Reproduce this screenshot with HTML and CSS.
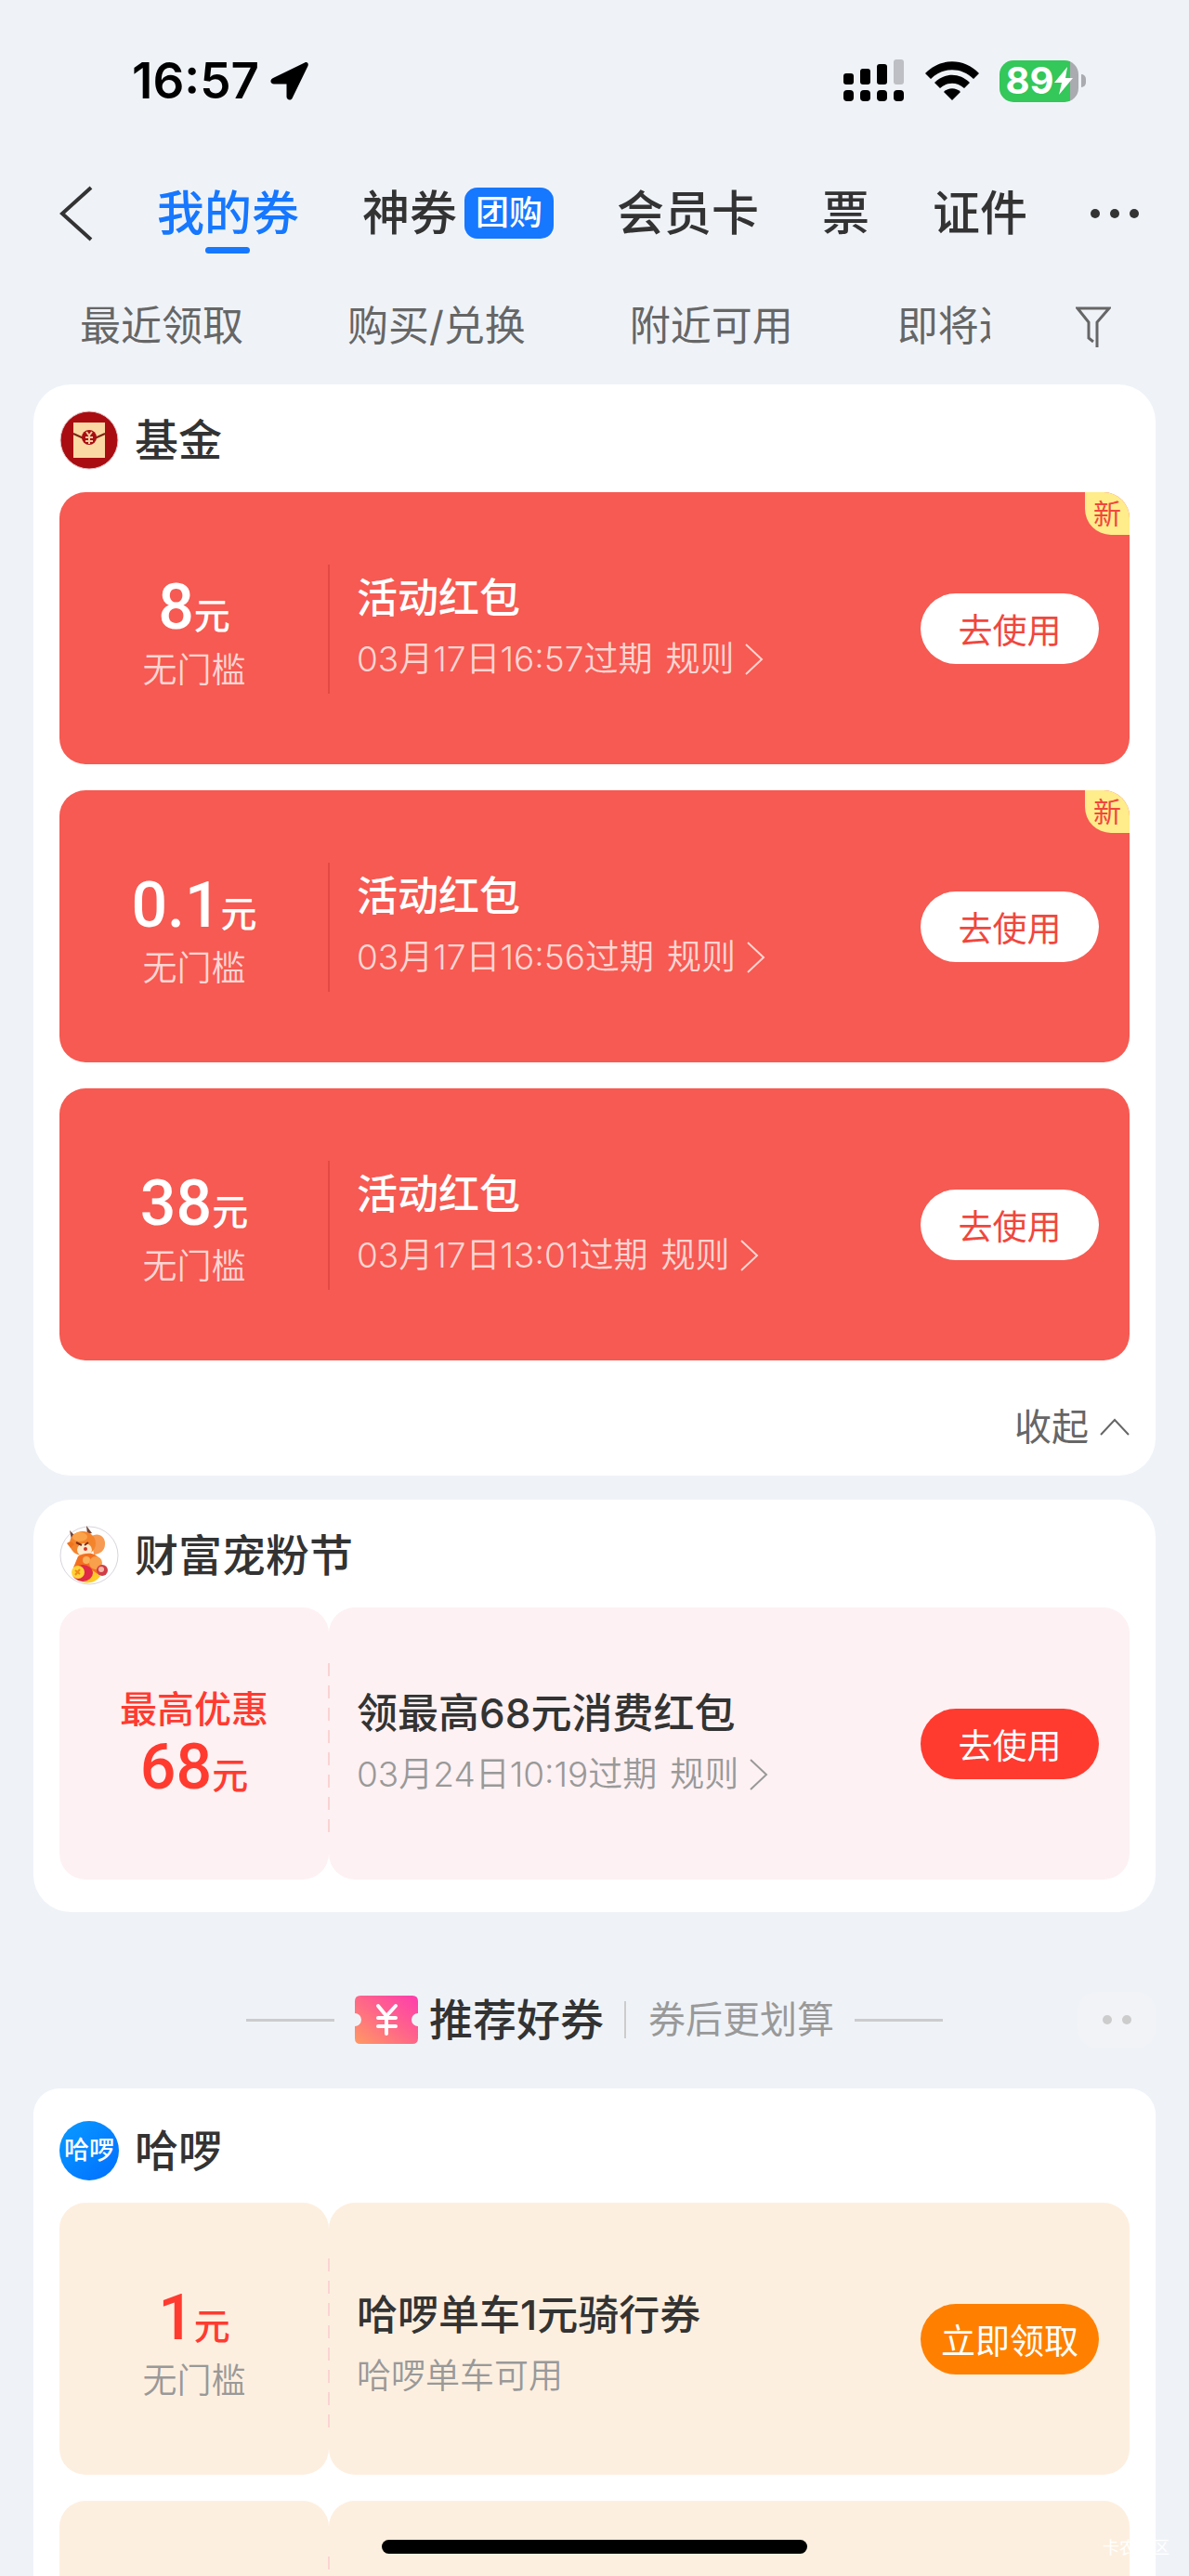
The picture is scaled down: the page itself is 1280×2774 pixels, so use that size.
FILE: index.html
```html
<!DOCTYPE html>
<html lang="zh-CN">
<head>
    <meta charset="UTF-8">
    <meta name="viewport" content="width=device-width, initial-scale=1.0">
    <title>我的券</title>
    <link rel="stylesheet" href="styles.css">
</head>
<body>
    <div class="app">
        <div class="status-bar">
            <div class="status-left">
                <span>16:57</span>
                <svg width="42" height="42" viewBox="0 0 42 42"><path d="M37 1.500 3 18c-4 2-3 6.500 1 6.500h13.500V38c0 4 5 5 6.500 1L40.500 5c1-3-1-5-3.500-3.500z"/></svg>
            </div>
            <div class="status-right">
                <svg width="66" height="46" viewBox="0 0 66 46">
                    <rect x="0" y="15" width="11" height="12" rx="3"/>
                    <rect x="18" y="10" width="11" height="17" rx="3"/>
                    <rect x="36" y="5" width="11" height="22" rx="3"/>
                    <rect x="54" y="0" width="11" height="27" rx="3" fill="#bdbfc4"/>
                    <rect x="0" y="33" width="11" height="12" rx="4"/>
                    <rect x="18" y="33" width="11" height="12" rx="4"/>
                    <rect x="36" y="33" width="11" height="12" rx="4"/>
                    <rect x="54" y="33" width="11" height="12" rx="4"/>
                </svg>
                <svg width="58" height="43" viewBox="0 0 58 43">
                    <path d="M0 13C16-4 42-4 58 13l-6 6C39 6 19 6 6 19z"/>
                    <path d="M10 23c11-11 27-11 38 0l-6 6c-8-7-18-7-26 0z"/>
                    <path d="M20 33c5-5 13-5 18 0l-9 9z"/>
                </svg>
                <div class="battery">
                    <span>89</span>
                    <svg width="20" height="30" viewBox="0 0 20 30"><path d="M14 0 0 17h8L5 30 20 12h-8z" fill="#fff"/></svg>
                </div>
            </div>
        </div>

        <nav class="top-nav">
            <a class="back" href="#" aria-label="返回">
                <svg width="38" height="60" viewBox="0 0 38 60"><path d="M35 2 4 30l31 28" fill="none" stroke="#333" stroke-width="4"/></svg>
            </a>
            <a class="tab active" href="#">我的券</a>
            <a class="tab" href="#">神券<span class="tab-badge">团购</span></a>
            <a class="tab" href="#">会员卡</a>
            <a class="tab" href="#">票</a>
            <a class="tab" href="#">证件</a>
            <button class="more" aria-label="更多"><i></i><i></i><i></i></button>
        </nav>

        <div class="filter-bar">
            <div class="filters">
                <a href="#">最近领取</a>
                <a href="#">购买/兑换</a>
                <a href="#">附近可用</a>
                <a href="#">即将过期</a>
            </div>
            <button class="filter-button" aria-label="筛选">
                <svg width="38" height="44" viewBox="0 0 38 44"><path d="M23 44V17L36 2H2l12 15v17l5 4" fill="none" stroke="#666" stroke-width="3"/></svg>
            </button>
        </div>

        <main>
            <section class="card">
                <h2>
                    <svg class="logo" viewBox="0 0 64 64">
                        <circle cx="32" cy="32" r="31" fill="#a90d12" stroke="#e4c9c9"/>
                        <rect x="15" y="13" width="34" height="38" fill="#fad9a4"/>
                        <path d="m15 25 11 5M49 25l-11 5" stroke="#7c2614" stroke-width="2"/>
                        <circle cx="32" cy="29" r="8" fill="#a90d12"/>
                        <path d="m29 23 3 4 3-4M32 27v9M28 29h8M28 33h8" fill="none" stroke="#f1cda0" stroke-width="2"/>
                    </svg>
                    基金
                </h2>
                <div class="coupon red">
                    <div class="amount">
                        <p class="price"><b>8</b>元</p>
                        <p class="limit">无门槛</p>
                    </div>
                    <div class="info">
                        <h3>活动红包</h3>
                        <p>03月17日16:57过期 <a href="#">规则<svg class="arrow" viewBox="0 0 20 34"><path d="m1 1 17 16L1 33"/></svg></a></p>
                    </div>
                    <button class="use">去使用</button>
                    <span class="new">新</span>
                </div>
                <div class="coupon red">
                    <div class="amount">
                        <p class="price"><b>0.1</b>元</p>
                        <p class="limit">无门槛</p>
                    </div>
                    <div class="info">
                        <h3>活动红包</h3>
                        <p>03月17日16:56过期 <a href="#">规则<svg class="arrow" viewBox="0 0 20 34"><path d="m1 1 17 16L1 33"/></svg></a></p>
                    </div>
                    <button class="use">去使用</button>
                    <span class="new">新</span>
                </div>
                <div class="coupon red">
                    <div class="amount">
                        <p class="price"><b>38</b>元</p>
                        <p class="limit">无门槛</p>
                    </div>
                    <div class="info">
                        <h3>活动红包</h3>
                        <p>03月17日13:01过期 <a href="#">规则<svg class="arrow" viewBox="0 0 20 34"><path d="m1 1 17 16L1 33"/></svg></a></p>
                    </div>
                    <button class="use">去使用</button>
                </div>
                <button class="collapse">收起<svg width="32" height="20" viewBox="0 0 32 20"><path d="M1 18 16 2l15 16" fill="none" stroke="#666" stroke-width="2"/></svg></button>
            </section>

            <section class="card">
                <h2>
                    <svg class="logo" viewBox="0 0 64 64">
                        <circle cx="32" cy="32" r="31" fill="#fff" stroke="#d8d4dc"/>
                        <path d="m13 15-2-10 7 7zM30 9l-1-9 6 8z" fill="#72453a"/>
                        <path d="M34 12c7-6 16 0 15 8 0 7-6 11-12 11z" fill="#f79a52"/>
                        <ellipse cx="25" cy="19" rx="14" ry="13" fill="#f4842c"/>
                        <ellipse cx="22" cy="12" rx="8" ry="5" fill="#fba34a"/>
                        <path d="M8 19c3-3 6-2 8 1l-4 4z" fill="#ef741e"/>
                        <ellipse cx="27" cy="26" rx="8" ry="7" fill="#ffe9c9"/>
                        <path d="m18 18 6 3M31 18l-4 3" stroke="#7b2d1c" stroke-width="2"/>
                        <circle cx="28" cy="25" r="2" fill="#d8312a"/>
                        <path d="M20 33c7-4 18-5 22 2l5 12-14 12H20l-5-14z" fill="#f36f20"/>
                        <circle cx="29" cy="37" r="4" fill="#fbb25c"/>
                        <circle cx="39" cy="40" r="7" fill="#f8a04b"/>
                        <path d="M20 58c8 6 19 4 24-4l-10-7z" fill="#ffc928"/>
                        <ellipse cx="25" cy="51" rx="11" ry="9" fill="#e02848"/>
                        <circle cx="20" cy="50" r="7" fill="#ffd33a"/>
                        <path d="m17 48 5 4m0-5-5 6" stroke="#f28a18" stroke-width="2"/>
                        <circle cx="46" cy="48" r="6" fill="#cf3d46"/>
                        <circle cx="45" cy="47" r="3" fill="#f4b7a5"/>
                    </svg>
                    财富宠粉节
                </h2>
                <div class="coupon pink">
                    <div class="amount">
                        <p class="top-offer">最高优惠</p>
                        <p class="price"><b>68</b>元</p>
                    </div>
                    <div class="info">
                        <h3>领最高68元消费红包</h3>
                        <p>03月24日10:19过期 <a href="#">规则<svg class="arrow" viewBox="0 0 20 34"><path d="m1 1 17 16L1 33"/></svg></a></p>
                    </div>
                    <button class="use">去使用</button>
                </div>
            </section>

            <div class="recommend">
                <svg width="68" height="52" viewBox="0 0 68 52">
                    <defs>
                        <linearGradient id="ticket" x1="0" y1="1" x2="1" y2="0">
                            <stop offset="0" stop-color="#ff9a62"/>
                            <stop offset="0.5" stop-color="#ff6688"/>
                            <stop offset="1" stop-color="#ff3cae"/>
                        </linearGradient>
                    </defs>
                    <path d="M6 0h56q6 0 6 6v13a7 7 0 0 0 0 14v13q0 6-6 6H6q-6 0-6-6V33a7 7 0 0 0 0-14V6q0-6 6-6z" fill="url(#ticket)"/>
                    <path d="m25 11 9 11 10-11M34 23v18M25 24h19M25 33h19" fill="none" stroke="#fff" stroke-width="4" stroke-linecap="round"/>
                </svg>
                <h2>推荐好券</h2>
                <span>券后更划算</span>
                <button class="feedback" aria-label="更多推荐"><i></i><i></i></button>
            </div>

            <section class="card promo">
                <h2>
                    <span class="logo hello">哈啰</span>
                    哈啰
                </h2>
                <div class="coupon orange">
                    <div class="amount">
                        <p class="price"><b>1</b>元</p>
                        <p class="limit">无门槛</p>
                    </div>
                    <div class="info">
                        <h3>哈啰单车1元骑行券</h3>
                        <p>哈啰单车可用</p>
                    </div>
                    <button class="use">立即领取</button>
                </div>
                <div class="coupon orange">
                    <div class="amount"></div>
                    <div class="info"></div>
                </div>
            </section>
        </main>

        <div class="home-bar"></div>
        <span class="watermark">卡农社区</span>
    </div>
</body>
</html>
```

FILE: styles.css
```css
* {
    box-sizing: border-box;
}

body {
    margin: 0;
    background-color: #eff3f8;
    color: #333;
    font-family: Inter, "Noto Sans CJK SC", sans-serif;
    line-height: 1.4;
}

h2, h3, p {
    margin: 0;
    font-weight: 500;
}

a {
    color: inherit;
    text-decoration: none;
}

button {
    padding: 0;
    border: none;
    background: none;
    color: inherit;
    font-family: inherit;
    cursor: pointer;
}

svg {
    display: block;
    flex-shrink: 0;
}

.app {
    position: relative;
    height: 100vh;
    overflow: hidden;
}

/* status bar */
.status-bar {
    display: flex;
    justify-content: space-between;
    align-items: center;
    height: 174px;
    padding: 0 119px 0 142px;
    color: #000;
}

.status-left {
    display: flex;
    align-items: center;
    gap: 12px;
    font-size: 53px;
    font-weight: 600;
}

.status-right {
    display: flex;
    align-items: center;
    gap: 22px;
}

.battery {
    position: relative;
    display: flex;
    align-items: center;
    justify-content: center;
    width: 85px;
    height: 45px;
    border-radius: 15px;
    background: linear-gradient(to right, #34c759 76px, #a9abb0 76px);
    color: #fff;
    font-size: 40px;
    font-weight: 700;
}

.battery::after {
    content: "";
    position: absolute;
    left: 88px;
    width: 5px;
    height: 14px;
    border-radius: 0 5px 5px 0;
    background-color: #a9abb0;
}

/* navigation */
.top-nav {
    display: flex;
    align-items: center;
    justify-content: space-between;
    height: 112px;
    padding: 0 54px 0 63px;
    font-size: 51px;
    font-weight: 500;
}

.tab {
    position: relative;
    display: flex;
    align-items: center;
    gap: 8px;
    white-space: nowrap;
}

.tab.active {
    color: #1677ff;
}

.tab.active::after {
    content: "";
    position: absolute;
    left: 50%;
    bottom: -7px;
    width: 48px;
    height: 7px;
    margin-left: -24px;
    border-radius: 4px;
    background-color: #1677ff;
}

.tab-badge {
    padding: 0 12px;
    border-radius: 14px;
    background-color: #1677ff;
    color: #fff;
    font-size: 36px;
    line-height: 55px;
}

.more {
    display: flex;
    gap: 11px;
}

.more i,
.feedback i {
    width: 10px;
    height: 10px;
    border-radius: 50%;
    background-color: #333;
}

.filter-bar {
    display: flex;
    align-items: center;
    justify-content: space-between;
    height: 128px;
    padding: 4px 84px 0 86px;
    color: #666;
    font-size: 44px;
}

.filters {
    display: flex;
    gap: 112px;
    width: 980px;
    overflow: hidden;
    white-space: nowrap;
}

/* cards */
main {
    padding: 0 36px;
}

.card {
    margin-bottom: 26px;
    padding: 28px 28px 35px;
    border-radius: 40px;
    background-color: #fff;
}

.card h2 {
    display: flex;
    align-items: center;
    gap: 17px;
    height: 64px;
    margin-bottom: 24px;
    font-size: 47px;
}

.logo {
    width: 64px;
    height: 64px;
}

.coupon {
    position: relative;
    display: flex;
    align-items: center;
    height: 293px;
    margin-bottom: 28px;
    padding-right: 33px;
    border-radius: 28px;
}

.coupon:last-child {
    margin-bottom: 0;
}

.amount {
    display: flex;
    flex-direction: column;
    align-items: center;
    justify-content: center;
    width: 290px;
    height: 100%;
    padding-top: 18px;
}

.price {
    font-size: 39px;
    line-height: 64px;
}

.price b {
    font-family: Roboto, sans-serif;
    font-size: 68px;
    font-weight: 500;
}

.limit {
    font-size: 37px;
    line-height: 54px;
    font-weight: 350;
}

.top-offer {
    font-size: 40px;
    line-height: 60px;
}

.info {
    flex: 1;
    padding-left: 30px;
}

.info h3 {
    font-size: 44px;
    line-height: 66px;
}

.info p {
    display: flex;
    gap: 14px;
    font-size: 37px;
    line-height: 66px;
    font-weight: 350;
}

.info p a {
    display: flex;
    align-items: center;
    gap: 12px;
}

.arrow {
    width: 20px;
    height: 38px;
    fill: none;
    stroke: currentColor;
    stroke-width: 2;
}

.use {
    width: 192px;
    height: 76px;
    border-radius: 38px;
    font-size: 37px;
}

.red {
    background-color: #f65a52;
    color: #fff;
}

.red::before {
    content: "";
    position: absolute;
    left: 289px;
    top: 78px;
    bottom: 76px;
    width: 2px;
    background-color: #e34a43;
}

.red .limit,
.red .info p {
    color: #fdd5d2;
}

.red .use {
    background-color: #fff;
    color: #f0473e;
}

.new {
    position: absolute;
    top: 0;
    right: 0;
    width: 48px;
    border-radius: 0 28px 0 28px;
    background-color: #ffec8b;
    color: #f0473e;
    font-size: 30px;
    line-height: 46px;
    text-align: center;
}

.collapse {
    display: flex;
    align-items: center;
    gap: 12px;
    margin: 55px 0 0 auto;
    color: #666;
    font-size: 40px;
    line-height: 34px;
}

/* coupons split in two parts */
.pink,
.orange {
    padding-right: 0;
}

.pink::before,
.orange::before {
    content: "";
    position: absolute;
    left: 289px;
    top: 60px;
    bottom: 50px;
    width: 2px;
    background: repeating-linear-gradient(#fad3d3 0 14px, transparent 14px 24px);
}

.pink .amount,
.pink .info,
.orange .amount,
.orange .info {
    border-radius: 28px;
}

.pink .info,
.orange .info {
    display: flex;
    flex-direction: column;
    justify-content: center;
    height: 100%;
}

.pink .use,
.orange .use {
    position: absolute;
    right: 33px;
    color: #fff;
}

.pink .amount,
.pink .info {
    background-color: #fdf1f3;
}

.orange .amount,
.orange .info {
    background-color: #fdefdf;
}

.pink .amount,
.orange .price {
    color: #ff3b30;
}

.pink .info p,
.orange .info p,
.orange .limit {
    color: #999;
}

.pink .use {
    background-color: #ff3b30;
}

.orange .use {
    background-color: #ff8000;
}

.orange .info {
    padding-top: 14px;
}

.pink .amount {
    padding-top: 0;
}

/* recommended coupons */
.recommend {
    position: relative;
    display: flex;
    align-items: center;
    justify-content: center;
    gap: 12px;
    height: 112px;
    margin: 60px 0 18px;
}

.recommend::before,
.recommend::after {
    content: "";
    width: 95px;
    height: 3px;
    background-color: #ccc;
}

.recommend::before {
    margin-right: 10px;
}

.recommend::after {
    margin-left: 10px;
}

.recommend h2 {
    font-size: 47px;
}

.recommend span {
    margin-left: 10px;
    padding-left: 24px;
    border-left: 2px solid #ccc;
    color: #999;
    font-size: 40px;
    line-height: 40px;
}

.feedback {
    position: absolute;
    right: 0;
    display: flex;
    align-items: center;
    justify-content: center;
    gap: 11px;
    width: 84px;
    height: 60px;
    border-radius: 20px;
    background-color: #f1f3f7;
}

.feedback i {
    background-color: #ccc;
}

.promo {
    padding-top: 35px;
    border-radius: 28px;
}

.hello {
    border-radius: 50%;
    background: linear-gradient(135deg, #0a9bff, #006eff);
    color: #fff;
    font-size: 27px;
    line-height: 64px;
    text-align: center;
}

.home-bar {
    position: absolute;
    left: 50%;
    bottom: 24px;
    width: 458px;
    height: 15px;
    margin-left: -229px;
    border-radius: 8px;
    background-color: #000;
}

.watermark {
    position: absolute;
    right: 21px;
    bottom: 18px;
    color: #fff;
    font-size: 18px;
}
```
